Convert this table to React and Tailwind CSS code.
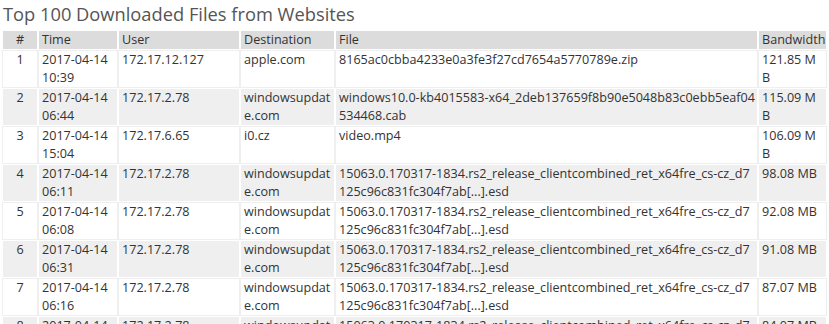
import React from "react";

const rows = [
  ["1", "2017-04-14 10:39", "172.17.12.127", "apple.com", "8165ac0cbba4233e0a3fe3f27cd7654a5770789e.zip", "121.85 MB"],
  ["2", "2017-04-14 06:44", "172.17.2.78", "windowsupdate.com", "windows10.0-kb4015583-x64_2deb137659f8b90e5048b83c0ebb5eaf04534468.cab", "115.09 MB"],
  ["3", "2017-04-14 15:04", "172.17.6.65", "i0.cz", "video.mp4", "106.09 MB"],
  ["4", "2017-04-14 06:11", "172.17.2.78", "windowsupdate.com", "15063.0.170317-1834.rs2_release_clientcombined_ret_x64fre_cs-cz_d7125c96c831fc304f7ab[...].esd", "98.08 MB"],
  ["5", "2017-04-14 06:08", "172.17.2.78", "windowsupdate.com", "15063.0.170317-1834.rs2_release_clientcombined_ret_x64fre_cs-cz_d7125c96c831fc304f7ab[...].esd", "92.08 MB"],
  ["6", "2017-04-14 06:31", "172.17.2.78", "windowsupdate.com", "15063.0.170317-1834.rs2_release_clientcombined_ret_x64fre_cs-cz_d7125c96c831fc304f7ab[...].esd", "91.08 MB"],
  ["7", "2017-04-14 06:16", "172.17.2.78", "windowsupdate.com", "15063.0.170317-1834.rs2_release_clientcombined_ret_x64fre_cs-cz_d7125c96c831fc304f7ab[...].esd", "87.07 MB"],
  ["8", "2017-04-14 06:21", "172.17.2.78", "windowsupdate.com", "15063.0.170317-1834.rs2_release_clientcombined_ret_x64fre_cs-cz_d7125c96c831fc304f7ab[...].esd", "84.07 MB"],
];

const pads = [
  "px-[3px] text-center",
  "px-[3px] text-left",
  "px-[3px] text-left",
  "px-[3px] text-left",
  "pl-[3px] pr-[1px] text-left",
  "pl-[3px] pr-[4px] text-left",
];

export default function App() {
  return (
    <div
      className="w-[829px] h-[324px] overflow-hidden bg-white text-[#333]"
      style={{ fontFamily: '"Open Sans", "Noto Sans", sans-serif' }}
    >
      <h1 className="text-[18.3px] leading-[24px] text-[#555] pl-[3px] pt-[2px] font-normal">
        Top 100 Downloaded Files from Websites
      </h1>
      <table className="table-fixed border-separate border-spacing-0 w-[825px] ml-[2px] mt-[4px] text-[12.6px] leading-[18px] break-all">
        <colgroup>
          <col className="w-[36px]" />
          <col className="w-[80px]" />
          <col className="w-[122px]" />
          <col className="w-[95px]" />
          <col className="w-[423px]" />
          <col className="w-[69px]" />
        </colgroup>
        <thead>
          <tr className="bg-[#dcdcdc]">
            {["#", "Time", "User", "Destination", "File", "Bandwidth"].map((h, j) => (
              <th
                key={j}
                className={"border border-white font-normal whitespace-nowrap " + pads[j]}
              >
                {h}
              </th>
            ))}
          </tr>
        </thead>
        <tbody>
          {rows.map((r, i) => {
            const odd = i % 2 === 0;
            const cell = odd
              ? "border border-[#efefef] bg-white align-top "
              : "border border-white bg-[#efefef] align-top ";
            return (
              <tr key={i}>
                {r.map((c, j) => (
                  <td key={j} className={cell + pads[j]}>
                    {c}
                  </td>
                ))}
              </tr>
            );
          })}
        </tbody>
      </table>
    </div>
  );
}
